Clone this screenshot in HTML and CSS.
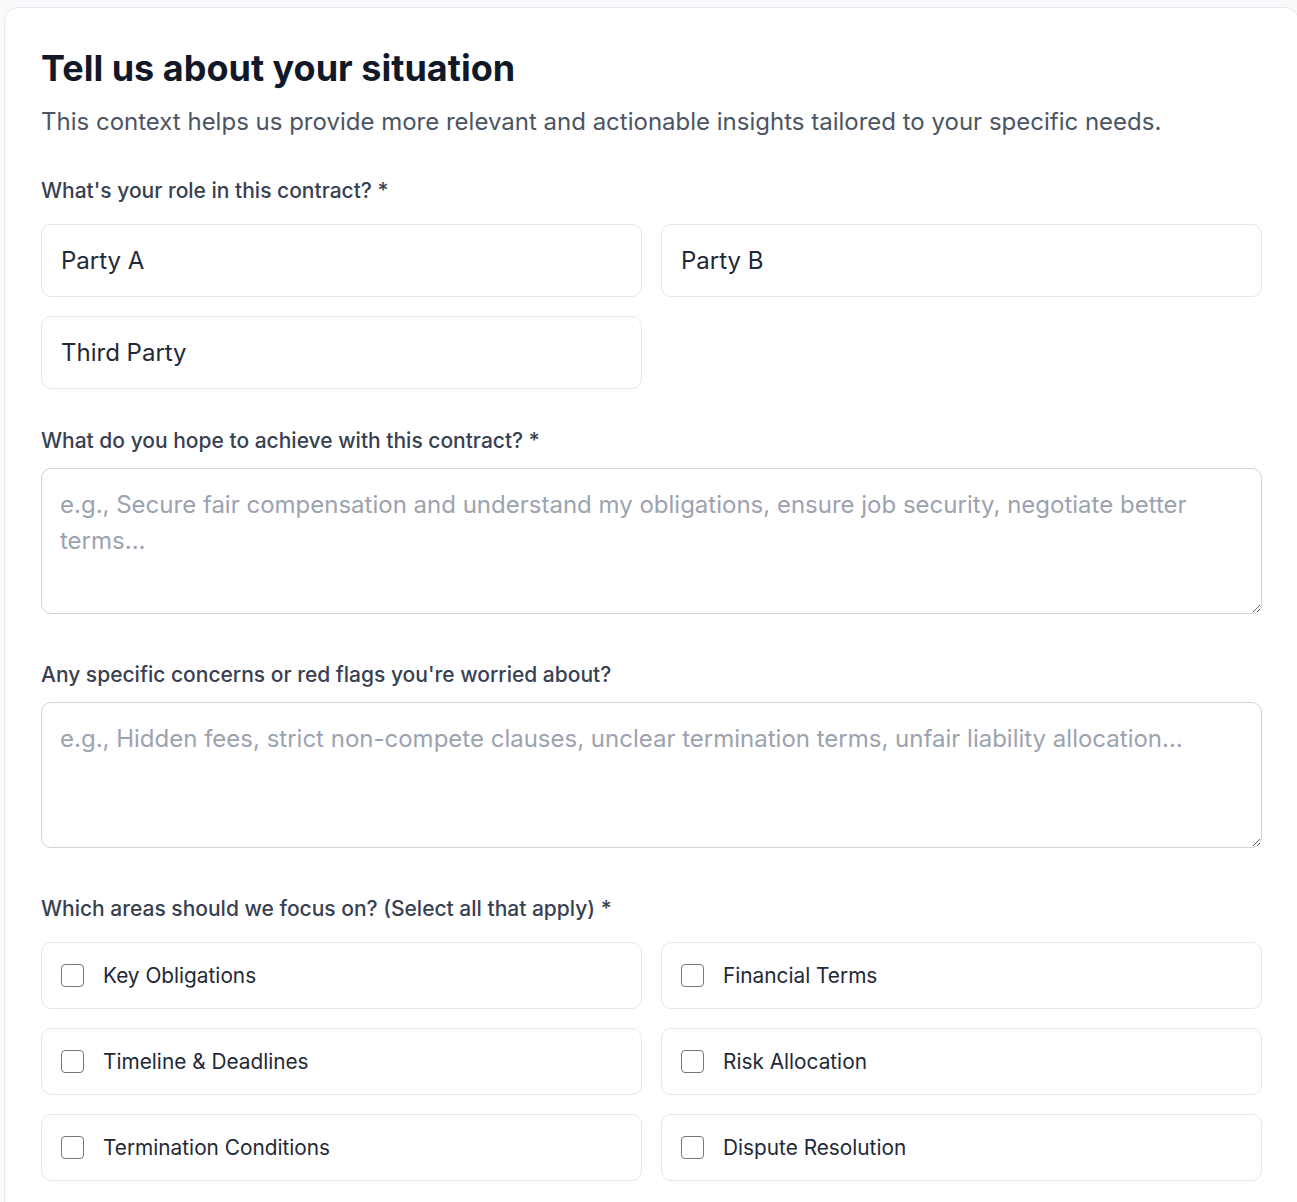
FILE: index.html
```html
<!DOCTYPE html>
<html lang="en">
<head>
<meta charset="utf-8">
<title>Tell us about your situation</title>
<link rel="stylesheet" href="styles.css">
</head>
<body>
<main class="card">
  <h1 class="title">Tell us about your situation</h1>
  <p class="subtitle">This context helps us provide more relevant and actionable insights tailored to your specific needs.</p>

  <section class="field field-role">
    <div class="label">What's your role in this contract? *</div>
    <div class="grid">
      <button class="option" type="button">Party A</button>
      <button class="option" type="button">Party B</button>
      <button class="option" type="button">Third Party</button>
    </div>
  </section>

  <section class="field field-goal">
    <label class="label label-text" for="goal">What do you hope to achieve with this contract? *</label>
    <textarea id="goal" class="textarea" rows="3" placeholder="e.g., Secure fair compensation and understand my obligations, ensure job security, negotiate better terms..."></textarea>
  </section>

  <section class="field field-concern">
    <label class="label label-text" for="concern">Any specific concerns or red flags you're worried about?</label>
    <textarea id="concern" class="textarea" rows="3" placeholder="e.g., Hidden fees, strict non-compete clauses, unclear termination terms, unfair liability allocation..."></textarea>
  </section>

  <section class="field field-focus">
    <div class="label">Which areas should we focus on? (Select all that apply) *</div>
    <div class="grid">
      <label class="check"><input type="checkbox" class="box"><span>Key Obligations</span></label>
      <label class="check"><input type="checkbox" class="box"><span>Financial Terms</span></label>
      <label class="check"><input type="checkbox" class="box"><span>Timeline &amp; Deadlines</span></label>
      <label class="check"><input type="checkbox" class="box"><span>Risk Allocation</span></label>
      <label class="check"><input type="checkbox" class="box"><span>Termination Conditions</span></label>
      <label class="check"><input type="checkbox" class="box"><span>Dispute Resolution</span></label>
    </div>
  </section>
</main>
</body>
</html>
```

FILE: styles.css
```css
html, body {
  margin: 0;
  padding: 0;
  background: #f9fafb;
  overflow: hidden;
}
body {
  padding: 7px 0 0 4px;
  font-family: Inter, "Noto Sans", "Liberation Sans", sans-serif;
  color: #111827;
}
.card {
  box-sizing: border-box;
  width: 1295px;
  min-height: 1300px;
  background: #ffffff;
  border: 1px solid #e5e7eb;
  border-radius: 14px;
  padding: 36px;
}
.title {
  margin: 0;
  font-size: 36px;
  line-height: 48px;
  font-weight: 700;
  color: #111827;
}
.subtitle {
  margin: 12px 0 0 0;
  font-size: 24px;
  line-height: 36px;
  color: #4b5563;
}
.field {
  display: flex;
  flex-direction: column;
}
.field-role { margin-top: 37px; }
.field-goal { margin-top: 38px; }
.field-concern { margin-top: 47px; }
.field-focus { margin-top: 47px; }
.label {
  display: block;
  font-size: 21px;
  line-height: 28px;
  font-weight: 500;
  color: #374151;
  margin-bottom: 19px;
}
.label-text {
  margin-bottom: 13px;
}
.grid {
  display: grid;
  grid-template-columns: 1fr 1fr;
  gap: 19px;
}
.option {
  box-sizing: border-box;
  height: 73px;
  text-align: left;
  background: #ffffff;
  border: 1px solid #e5e7eb;
  border-radius: 10px;
  padding: 0 19px;
  font-family: inherit;
  font-size: 24px;
  color: #1f2937;
  cursor: pointer;
}
.textarea {
  display: block;
  box-sizing: border-box;
  width: 100%;
  height: 146px;
  margin: 0;
  border: 1px solid #d1d5db;
  border-radius: 10px;
  padding: 18px;
  font-family: inherit;
  font-size: 24px;
  line-height: 36px;
  color: #1f2937;
  resize: vertical;
  outline: none;
}
.textarea::placeholder {
  color: #9ca3af;
}
.check {
  box-sizing: border-box;
  height: 67px;
  display: flex;
  align-items: center;
  gap: 19px;
  border: 1px solid #e5e7eb;
  border-radius: 10px;
  padding: 0 19px;
  font-size: 20.8px;
  color: #1f2937;
  cursor: pointer;
}
.box {
  appearance: none;
  -webkit-appearance: none;
  margin: 0;
  width: 23px;
  height: 23px;
  border: 1.5px solid #767676;
  border-radius: 4px;
  background: #fff;
  flex: none;
}
```
